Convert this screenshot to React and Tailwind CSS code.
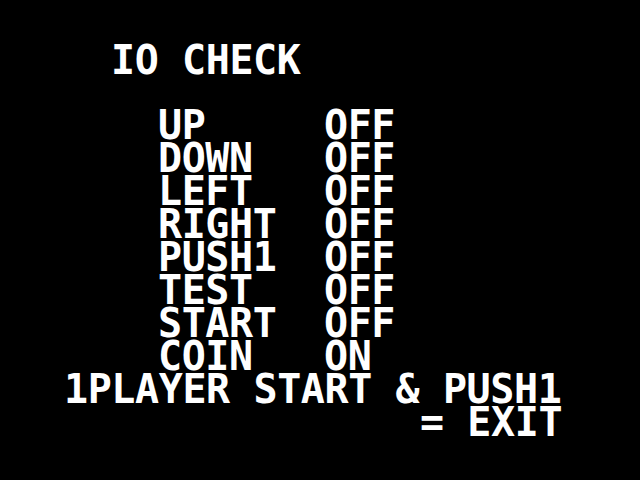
import React from 'react';

const rows = [
  ['UP', 'OFF'],
  ['DOWN', 'OFF'],
  ['LEFT', 'OFF'],
  ['RIGHT', 'OFF'],
  ['PUSH1', 'OFF'],
  ['TEST', 'OFF'],
  ['START', 'OFF'],
  ['COIN', 'ON'],
];

function App() {
  return (
    <div className="w-[640px] h-[480px] bg-black overflow-hidden">
      <div className="pl-[64px] pt-[44px] text-white font-bold text-[40px] leading-[33px] tracking-[-0.4px] whitespace-pre font-['DejaVu_Sans_Mono',monospace]">
        {/* titulo */}
        <div className="pl-[47px]">IO CHECK</div>

        {/* lista de entradas */}
        <div className="mt-[32px] pl-[94px] flex flex-col">
          {rows.map(([name, state]) => (
            <div key={name} className="flex">
              <span className="w-[166px]">{name}</span>
              <span>{state}</span>
            </div>
          ))}
        </div>

        <div>1PLAYER START &amp; PUSH1</div>
        <div className="pl-[356px]">= EXIT</div>
      </div>
    </div>
  );
}

export default App;
